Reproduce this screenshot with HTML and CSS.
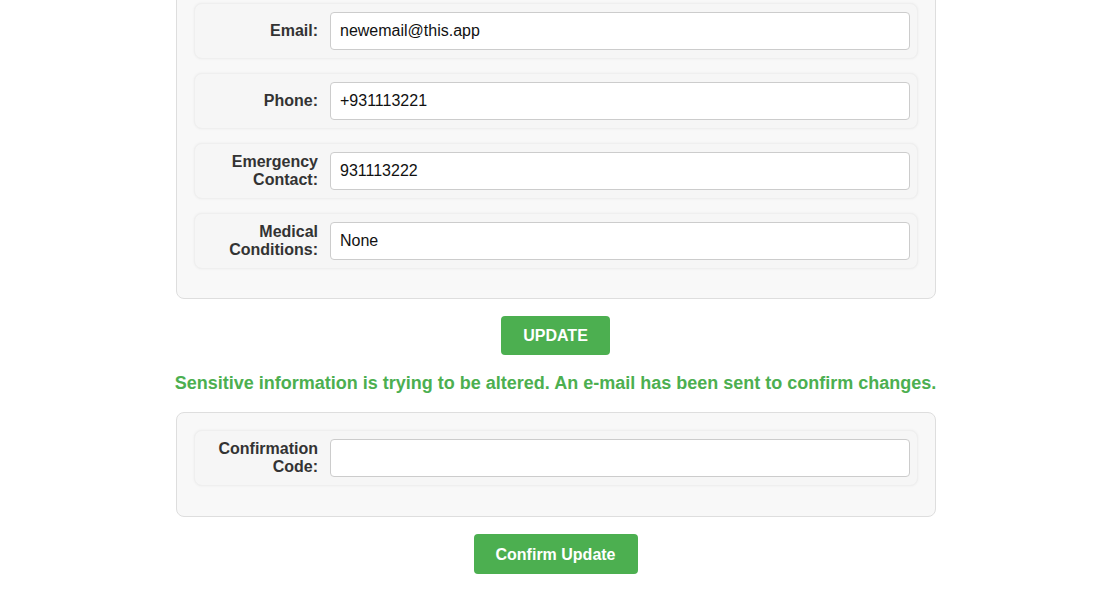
FILE: index.html
```html
<!DOCTYPE html>
<html lang="en">
<head>
<meta charset="utf-8">
<title>Update Profile</title>
<link rel="stylesheet" href="styles.css">
</head>
<body>
<div class="page">
  <div class="card card-top">
    <div class="row">
      <label class="label" for="email">Email:</label>
      <input class="field" id="email" type="text" value="newemail@this.app">
    </div>
    <div class="row">
      <label class="label" for="phone">Phone:</label>
      <input class="field" id="phone" type="text" value="+931113221">
    </div>
    <div class="row">
      <label class="label" for="emergency">Emergency Contact:</label>
      <input class="field" id="emergency" type="text" value="931113222">
    </div>
    <div class="row">
      <label class="label" for="medical">Medical Conditions:</label>
      <input class="field" id="medical" type="text" value="None">
    </div>
  </div>
  <div class="actions">
    <button class="btn btn-update" type="button">UPDATE</button>
  </div>
  <p class="notice">Sensitive information is trying to be altered. An e-mail has been sent to confirm changes.</p>
  <div class="card card-code">
    <div class="row">
      <label class="label" for="code">Confirmation Code:</label>
      <input class="field" id="code" type="text" value="">
    </div>
  </div>
  <div class="actions actions-confirm">
    <button class="btn btn-confirm" type="button">Confirm Update</button>
  </div>
</div>
</body>
</html>
```

FILE: styles.css
```css
* { box-sizing: border-box; }

html, body {
  margin: 0;
  padding: 0;
  background: #ffffff;
  font-family: "Liberation Sans", Arial, sans-serif;
}

.page {
  width: 760px;
  margin: 0 auto;
  padding-left: 1px;
  display: flex;
  flex-direction: column;
}

.card {
  width: 760px;
  background: #f8f8f8;
  border: 1px solid #dedede;
  border-radius: 8px;
  padding: 17px 17px 15px 17px;
}

.card-top {
  margin-top: -15px;
}

.card-code {
  padding-bottom: 16px;
}

.row {
  display: flex;
  align-items: center;
  gap: 12px;
  padding: 8px 7px 8px 8px;
  margin-bottom: 14px;
  background: #f6f6f6;
  border: 1px solid #efefef;
  border-radius: 8px;
  box-shadow: 0 0 3px rgba(0, 0, 0, 0.05);
}

.label {
  flex: 0 0 115px;
  text-align: right;
  font-weight: bold;
  font-size: 16px;
  line-height: 18px;
  color: #333333;
  margin-top: -1px;
}

.field {
  flex: 1 1 auto;
  height: 38px;
  border: 1px solid #cccccc;
  border-radius: 4px;
  background: #ffffff;
  padding: 0 9px;
  font-family: "Liberation Sans", Arial, sans-serif;
  font-size: 16px;
  color: #111111;
  outline: none;
}

.actions {
  display: flex;
  justify-content: center;
  margin-top: 17px;
}

.actions-confirm {
  margin-top: 17px;
}

.btn {
  background: #4caf50;
  color: #ffffff;
  border: none;
  border-radius: 4px;
  font-family: "Liberation Sans", Arial, sans-serif;
  font-weight: bold;
  font-size: 16px;
  line-height: 19px;
  padding: 10px 22px;
  cursor: pointer;
}

.btn-confirm {
  padding: 11px 22px 10px;
}

.notice {
  margin: 18px -10px 18px;
  text-align: center;
  white-space: nowrap;
  color: #4caf50;
  font-weight: bold;
  font-size: 18px;
  line-height: 21px;
}
```
